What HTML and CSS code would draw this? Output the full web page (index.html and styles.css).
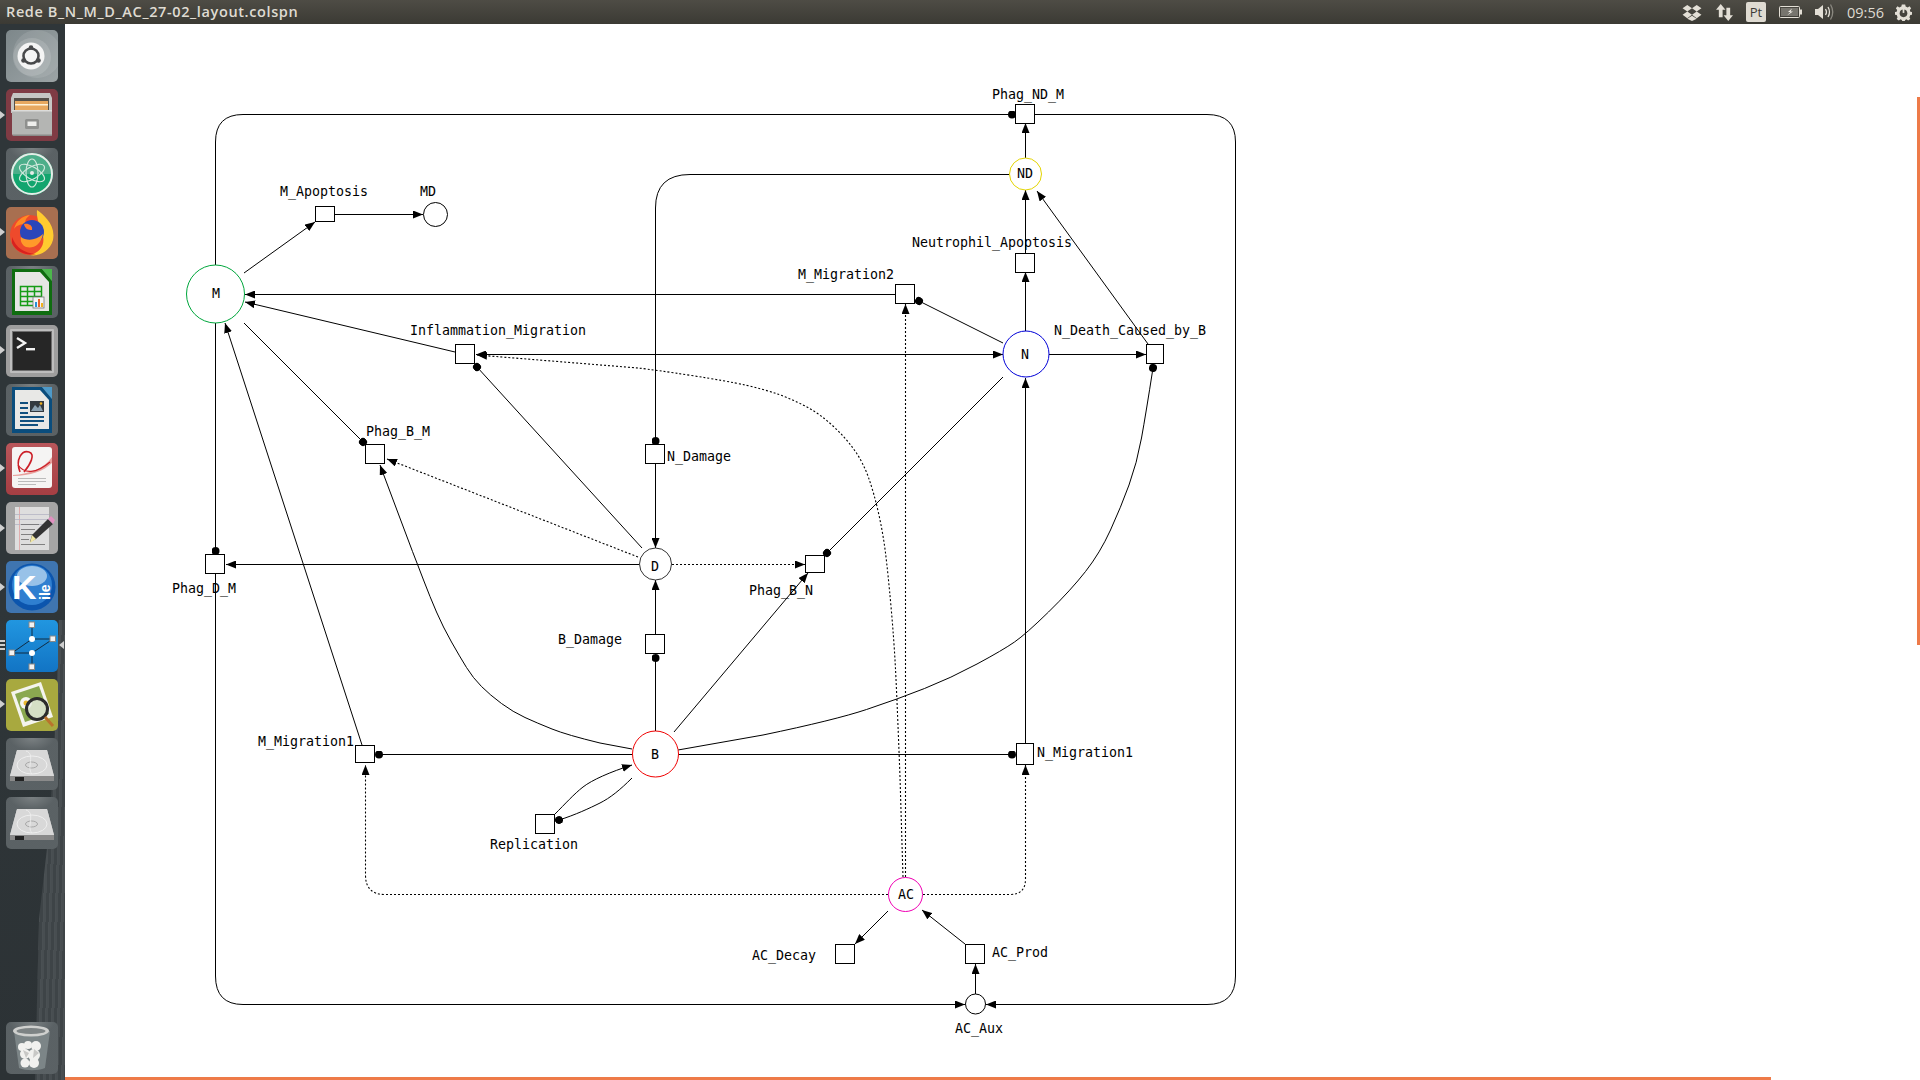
FILE: index.html
```html
<!DOCTYPE html>
<html lang="pt">
<head>
<meta charset="utf-8">
<title>Rede B_N_M_D_AC_27-02_layout.colspn</title>
<link rel="stylesheet" href="styles.css">
</head>
<body>
<div class="screen">
  <header class="topbar">
    <div class="title">Rede B_N_M_D_AC_27-02_layout.colspn</div>
    <div class="tray">
      <svg class="tray-icon dropbox" viewBox="0 0 20 18"><path d="M5 1 10 4.500 5 8 0 4.500ZM15 1 20 4.500 15 8 10 4.500ZM5 8 10 11.500 5 15 0 11.500ZM15 8 20 11.500 15 15 10 11.500ZM5 15.500 10 12.500 15 15.500 10 18Z"/></svg>
      <svg class="tray-icon updown" viewBox="0 0 18 18"><path d="M5 0 10 6H7V14H3V6H0ZM13 18 8 12H11V4H15V12H18Z"/></svg>
      <div class="lang">Pt</div>
      <svg class="tray-icon battery" viewBox="0 0 24 12"><rect x="0.500" y="0.500" width="20" height="11" rx="1" class="batt-shell"/><rect x="2" y="2" width="17" height="8" class="batt-fill"/><rect x="21" y="3.500" width="2" height="5"/><path d="M13 2.500 9 6H11.500L8 9.500 14 5.500H11.500Z" class="batt-bolt"/></svg>
      <svg class="tray-icon speaker" viewBox="0 0 20 18"><path d="M0 6H3L8 2V16L3 12H0Z"/><path d="M10.500 6Q12.500 9 10.500 12" class="wave"/><path d="M13 4Q16 9 13 14" class="wave"/><path d="M15.500 1.500Q20 9 15.500 16.500" class="wave dim"/></svg>
      <div class="clock">09:56</div>
      <svg class="tray-icon power" viewBox="0 0 20 20"><path d="M8 0.500 12 0.500 12.500 3 15 4 17 2.500 19 5 17.500 7 18 9 20 9.500V12.500L18 13 17 15.500 18 17.500 15.500 19.500 13.500 18 12 18.800 11.500 20H8.500L8 18.800 6.500 18 4.500 19.500 2 17.500 3 15.500 2 13 0 12.500V9.500L2 9 2.500 7 1 5 3 2.500 5 4 7.500 3Z"/><circle cx="10" cy="11" r="4.500" class="gear-hole"/><rect x="9" y="3.500" width="2" height="7" class="gear-bar"/></svg>
    </div>
  </header>

  <div class="main">
    <nav class="dock">
      <svg class="pips" viewBox="0 0 65 720" width="65" height="720">
        <path d="M0 87 5 91 0 95ZM0 204 5 208 0 212ZM0 322 5 326 0 330ZM0 440 5 444 0 448ZM0 500 5 504 0 508ZM0 559 5 563 0 567ZM0 676 5 680 0 684Z"/>
        <path d="M0 616H5V618H0ZM0 620H5V622H0ZM0 624H5V626H0Z"/>
        <path d="M64 617 59 621 64 625Z"/>
      </svg>
      <div class="tile t-ubuntu"><svg viewBox="0 0 52 52"><circle cx="31" cy="24" r="24" fill="#fff" opacity=".1"/><circle cx="26" cy="27" r="19" fill="#fff" opacity=".14"/><circle cx="25" cy="26" r="13.500" fill="#f4f4f4"/><circle cx="25" cy="26" r="7.500" fill="none" stroke="#48494b" stroke-width="2.600"/><circle cx="25" cy="17.500" r="2.300" fill="#48494b"/><circle cx="17.500" cy="30.500" r="2.300" fill="#48494b"/><circle cx="32.500" cy="30.500" r="2.300" fill="#48494b"/></svg></div>
      <div class="tile t-files"><svg viewBox="0 0 52 52"><path d="M7 4H44L46 9V24H5V9Z" fill="#c6c6c4"/><rect x="8" y="9" width="35" height="13" fill="#55504a"/><rect x="9" y="12" width="33" height="9" fill="#e8a860"/><rect x="9" y="15" width="33" height="1.500" fill="#fff2d8"/><path d="M6 22H45L46 23V47H7L6 45Z" fill="#b4b5b3"/><rect x="6" y="21" width="40" height="1.500" fill="#dcdcda"/><rect x="7" y="45.500" width="39" height="1.500" fill="#8a8a88"/><rect x="19" y="30" width="14" height="10" rx="1.500" fill="#8f908e"/><rect x="21.500" y="32.500" width="9" height="4.500" fill="#eeeeec"/></svg></div>
      <div class="tile t-atom"><svg viewBox="0 0 52 52"><circle cx="26" cy="26" r="21" fill="#12a56e"/><path d="M5 26A21 21 0 0 1 47 26Z" fill="#4cae8a"/><circle cx="26" cy="26" r="20" fill="none" stroke="#e6ece8" stroke-width="2"/><g fill="none" stroke="#cfe8dc" stroke-width="1.200"><ellipse cx="26" cy="25" rx="14" ry="6" transform="rotate(30 26 25)"/><ellipse cx="26" cy="25" rx="14" ry="6" transform="rotate(-30 26 25)"/><ellipse cx="26" cy="25" rx="14" ry="6" transform="rotate(90 26 25)"/></g><circle cx="26" cy="25" r="2" fill="#e6ece8"/></svg></div>
      <div class="tile t-firefox"><svg viewBox="0 0 52 52"><circle cx="24" cy="28" r="20" fill="#ee4a2c"/><path d="M31 3C38 8 50 18 47 33 44 44 33 50 24 48 34 46 39 38 37 29 36 22 30 14 31 3Z" fill="#ffcb2f"/><path d="M8 22C10 14 16 9 24 8 19 12 18 15 21 17 13 17 10 19 8 22Z" fill="#ff8a24"/><circle cx="26" cy="25" r="12" fill="#2b46ba"/><path d="M15 30C20 34 30 34 37 27 35 38 27 42 20 40 16 38 14 34 15 30Z" fill="#ff9a2a"/><path d="M18 17C22 16 27 18 26 23 22 23 19 22 18 17Z" fill="#ff7a2b"/><path d="M6 36C10 45 20 49 30 47 18 46 10 41 6 30Z" fill="#d8211f"/></svg></div>
      <div class="tile t-calc"><svg viewBox="0 0 52 52"><path d="M6 3H36L46 15V49H6Z" fill="#0f6d10"/><path d="M9 6H34L43 16V45H9Z" fill="#e6e6e4"/><path d="M36 3H46V15Z" fill="#4cb74c"/><g fill="none" stroke="#169c16" stroke-width="1.500"><rect x="14.500" y="20.500" width="21" height="19"/><path d="M14.500 25.500H35.500M14.500 30.500H35.500M14.500 35.500H35.500M21.500 20.500V39.500M28.500 20.500V39.500"/></g><rect x="27" y="31" width="11" height="11" fill="#f4f4f4" stroke="#777" stroke-width=".8"/><rect x="29" y="36" width="2" height="5" fill="#2a8fd6"/><rect x="32" y="33" width="2" height="8" fill="#e8632a"/><rect x="35" y="37" width="2" height="4" fill="#f2b11d"/></svg></div>
      <div class="tile t-term"><svg viewBox="0 0 52 52"><rect x="4" y="4" width="44" height="44" rx="1" fill="#bdbdbd"/><rect x="6" y="6" width="40" height="40" fill="#6e6e6e"/><rect x="7" y="7" width="38" height="38" fill="#262626"/><path d="M11 13 19 18 11 23" fill="none" stroke="#f2f2f2" stroke-width="2.400"/><rect x="20" y="23" width="9" height="2.400" fill="#f2f2f2"/></svg></div>
      <div class="tile t-writer"><svg viewBox="0 0 52 52"><path d="M6 3H36L46 15V49H6Z" fill="#0a4d7d"/><path d="M9 6H34L43 16V45H9Z" fill="#e8e8e6"/><path d="M36 3H46V15Z" fill="#4e9ac9"/><g fill="#11507f"><rect x="14" y="18" width="8" height="2"/><rect x="14" y="23" width="8" height="2"/><rect x="14" y="28" width="8" height="2"/><rect x="14" y="32" width="24" height="2"/><rect x="14" y="36" width="24" height="2"/><rect x="14" y="40" width="18" height="2"/></g><rect x="24" y="17" width="14" height="11" fill="#33393f"/><path d="M25 27 29 21 32 24 34 21 37 27Z" fill="#8aa0b0"/><circle cx="35" cy="19.500" r="1.300" fill="#f0b020"/></svg></div>
      <div class="tile t-pdf"><svg viewBox="0 0 52 52"><rect x="6" y="4" width="40" height="41" rx="3" fill="#f5f4f3"/><path d="M7 32C22 31 38 26 46 14V20C38 28 24 33 7 33Z" fill="#e8a09d"/><path d="M14 29C9 16 16 7 23 9 30 11 24 22 18 29" fill="none" stroke="#cc1f27" stroke-width="1.600"/><path d="M12 22C18 31 30 31 44 19" fill="none" stroke="#cc1f27" stroke-width="1.200"/><g fill="#bbb"><rect x="12" y="35" width="28" height="1"/><rect x="12" y="38" width="28" height="1"/><rect x="12" y="41" width="18" height="1"/></g></svg></div>
      <div class="tile t-notes"><svg viewBox="0 0 52 52"><rect x="9" y="5" width="34" height="43" fill="#dedede"/><rect x="13" y="5" width=".8" height="43" fill="#e0a0a0"/><g fill="#b5b5c4"><rect x="9" y="12" width="34" height=".8"/><rect x="9" y="17" width="34" height=".8"/><rect x="9" y="22" width="34" height=".8"/></g><g fill="#777"><rect x="15" y="22" width="18" height=".9"/><rect x="15" y="27" width="14" height=".9"/><rect x="15" y="32" width="12" height=".9"/><rect x="15" y="37" width="8" height=".9"/><rect x="15" y="42" width="24" height=".9"/></g><path d="M42 17 47 22 30 37 24 40 26 33Z" fill="#333"/><path d="M26 33 30 37 24 41Z" fill="#f0e6a0"/><path d="M42 17 45 14 49 18 47 22Z" fill="#e090c0"/></svg></div>
      <div class="tile t-kile"><svg viewBox="0 0 52 52"><circle cx="26" cy="26" r="23.500" fill="#0c55ad"/><circle cx="26" cy="24" r="20" fill="#2f7fd0"/><ellipse cx="26" cy="15" rx="15" ry="10" fill="#bcd8f0" opacity=".75"/><text x="6" y="38" class="kile-k">K</text><text x="0" y="0" class="kile-ile" transform="translate(44 39) rotate(-90)">ile</text></svg></div>
      <div class="tile t-graph"><svg viewBox="0 0 52 52"><g stroke="#123" stroke-width=".9" fill="none"><path d="M26 5V19M6 33 26 19H47M6 33H26M26 33 47 19M26 33V47"/></g><g fill="#f2f2f2" stroke="#888" stroke-width="1"><rect x="23" y="2" width="5.500" height="5.500"/><rect x="44" y="16" width="5.500" height="5.500"/><rect x="3" y="30" width="5.500" height="5.500"/><rect x="23" y="44" width="5.500" height="5.500"/></g><circle cx="26" cy="19" r="3" fill="#fff"/><circle cx="26" cy="33" r="3" fill="#fff"/></svg></div>
      <div class="tile t-image"><svg viewBox="0 0 52 52"><path d="M5 13 35 3 47 38 17 48Z" fill="#f4f4ee"/><path d="M9 15 33 7 43 35 19 43Z" fill="#8aa850"/><circle cx="20" cy="24" r="6" fill="#f5f5f0"/><circle cx="20" cy="24" r="2.500" fill="#e8b830"/><circle cx="31" cy="30" r="10.500" fill="#e7ece2" opacity=".8"/><circle cx="31" cy="30" r="10.500" fill="none" stroke="#2c2c2c" stroke-width="3"/><path d="M39 38 47 47" stroke="#b9732c" stroke-width="3"/></svg></div>
      <div class="tile t-glass"><svg viewBox="0 0 52 52"><path d="M11 12H41L48 38V43H4V38Z" fill="#c9c9c9"/><path d="M11 12H41L48 38H4Z" fill="#d8d8d8"/><ellipse cx="26" cy="27" rx="15" ry="9" fill="none" stroke="#eee" stroke-width="1"/><ellipse cx="25.500" cy="27" rx="6" ry="3" fill="none" stroke="#a8a8a8" stroke-width="1"/><path d="M20 13C30 16 20 30 26 36" fill="none" stroke="#f0f0f0" stroke-width=".8"/><rect x="4" y="38" width="44" height="5" fill="#8a8a8a"/><rect x="9" y="39" width="9" height="4" fill="#222"/></svg></div>
      <div class="tile t-glass"><svg viewBox="0 0 52 52"><path d="M11 12H41L48 38V43H4V38Z" fill="#c9c9c9"/><path d="M11 12H41L48 38H4Z" fill="#d8d8d8"/><ellipse cx="26" cy="27" rx="15" ry="9" fill="none" stroke="#eee" stroke-width="1"/><ellipse cx="25.500" cy="27" rx="6" ry="3" fill="none" stroke="#a8a8a8" stroke-width="1"/><path d="M20 13C30 16 20 30 26 36" fill="none" stroke="#f0f0f0" stroke-width=".8"/><rect x="4" y="38" width="44" height="5" fill="#8a8a8a"/><rect x="9" y="39" width="9" height="4" fill="#222"/></svg></div>
      <div class="dock-gap"></div>
      <div class="tile t-glass"><svg viewBox="0 0 52 52"><path d="M8 9 13 46C20 49 32 49 39 46L44 9Z" fill="#7c8587"/><ellipse cx="25" cy="9" rx="18" ry="5.500" fill="#cfd0ce"/><ellipse cx="25" cy="9" rx="14.500" ry="3" fill="#7d8384"/><g fill="#f1f1ef"><circle cx="16" cy="25" r="4"/><circle cx="22" cy="23" r="4"/><circle cx="30" cy="24" r="5"/><circle cx="19" cy="32" r="5"/><circle cx="28" cy="33" r="6"/><circle cx="19" cy="41" r="4.500"/><circle cx="28" cy="41" r="5"/></g><path d="M17 28 23 31 20 36ZM28 27 33 31 27 36Z" fill="#c8c8c6"/></svg></div>
    </nav>

    <main class="canvas">
      <svg class="net" viewBox="65 24 1855 1056" width="1855" height="1056">
        <defs>
          <marker id="arrow" viewBox="0 -4 10 8" refX="10" refY="0" markerWidth="10" markerHeight="8" markerUnits="userSpaceOnUse" orient="auto"><path d="M0 -4 10 0 0 4Z" fill="#000"/></marker>
          <marker id="dot" viewBox="-4 -4 8 8" refX="0" refY="0" markerWidth="8" markerHeight="8" markerUnits="userSpaceOnUse" orient="auto"><circle r="4" fill="#000"/></marker>
        </defs>

        <!-- solid arcs -->
        <g class="arc">
          <path marker-end="url(#dot)" d="M215.500 265V142Q215.500 114.500 243 114.500H1012"/>
          <path marker-end="url(#arrow)" d="M1035 114.500H1207Q1235.500 114.500 1235.500 142V976Q1235.500 1004.500 1207 1004.500H986"/>
          <path marker-end="url(#arrow)" d="M215.500 574V976Q215.500 1004.500 243 1004.500H965"/>
          <path marker-end="url(#dot)" d="M215.500 323V551"/>
          <path marker-end="url(#dot)" d="M1009 174.500H690Q655.500 174.500 655.500 208V441"/>
          <path marker-end="url(#arrow)" d="M655.500 464V548"/>
          <path marker-end="url(#dot)" d="M655.500 731V658"/>
          <path marker-end="url(#arrow)" d="M655.500 634V580"/>
          <path marker-end="url(#arrow)" d="M639 564.500H226"/>
          <path marker-end="url(#arrow)" d="M1025.500 331V272"/>
          <path marker-end="url(#arrow)" d="M1025.500 253V190"/>
          <path marker-end="url(#arrow)" d="M1025.500 158V123"/>
          <path marker-end="url(#arrow)" d="M1049 354.500H1146"/>
          <path marker-end="url(#arrow)" d="M488 354.500H1003"/>
          <path marker-end="url(#arrow)" d="M488 354.500H476"/>
          <path marker-end="url(#arrow)" d="M895 294.500H245"/>
          <path marker-end="url(#arrow)" d="M335 214.500H423"/>
          <path marker-end="url(#dot)" d="M632 754.500H379"/>
          <path marker-end="url(#dot)" d="M678 754.500H1012"/>
          <path marker-end="url(#arrow)" d="M1025.500 743V378"/>
          <path marker-end="url(#arrow)" d="M975.500 994V964"/>
        </g>
        <g class="arc thin">
          <path marker-end="url(#arrow)" d="M1148 344 1037 191"/>
          <path marker-end="url(#dot)" d="M1003 343 919 301"/>
          <path marker-end="url(#arrow)" d="M455 352 245 302"/>
          <path marker-end="url(#dot)" d="M244 323 363 442"/>
          <path marker-end="url(#arrow)" d="M244 273 315 222"/>
          <path marker-end="url(#arrow)" d="M362 745 225 323"/>
          <path marker-end="url(#dot)" d="M642 548 477 367"/>
          <path marker-end="url(#arrow)" d="M674 732 808 573"/>
          <path marker-end="url(#dot)" d="M1003 377 827 553"/>
          <path marker-end="url(#arrow)" d="M632 749 600 743Q567 735 552 729 537 723 525 717.500 513 712 501.500 703.500 490 695 481.500 686.500 473 678 466.500 667.500 460 657 451.500 642 443 627 436.500 612 430 597 423.500 580 417 563 412.500 551.500L380 465"/>
          <path marker-end="url(#dot)" d="M678 750 763 735Q835 720 866.500 709.500 898 699 924.500 688.500 951 678 977 664 1003 650 1014.500 642 1026 634 1048.500 612 1071 590 1085.500 571.500 1100 553 1110.500 530 1121 507 1129 485 1137 463 1141.500 438 1146 413 1153 368"/>
          <path marker-end="url(#arrow)" d="M555 814C565 804 574 794 583 787S610 772 632 765"/>
          <path marker-end="url(#dot)" d="M632 778C620 790 610 798 600 803S575 815 559 820"/>
          <path marker-end="url(#arrow)" d="M888 911 855 944"/>
          <path marker-end="url(#arrow)" d="M965 944 922 910"/>
        </g>

        <!-- dotted arcs -->
        <g class="arc dotted">
          <path marker-end="url(#arrow)" d="M672 564.500H805"/>
          <path marker-end="url(#arrow)" d="M638 557 387 459"/>
          <path marker-end="url(#arrow)" d="M923 894.500H1010Q1025.500 894.500 1025.500 879V765"/>
          <path marker-end="url(#arrow)" d="M888 894.500H385Q365.500 894.500 365.500 875V765"/>
          <path marker-end="url(#arrow)" d="M905.500 877V304"/>
          <path marker-end="url(#arrow)" d="M903 877 900 777Q897 698 895.500 669 894 640 891 606.500 888 573 885.500 553 883 533 878.500 513 874 493 868.500 477.500 863 462 854 449.500 845 437 832.500 425.500 820 414 806 406.500 792 399 777.500 394 763 389 745 385 727 381 691.500 375.500 656 370 638 368L477 355"/>
        </g>

        <!-- places -->
        <circle class="place p-m" cx="215.500" cy="294" r="29"/>
        <circle class="place" cx="435.500" cy="214.500" r="12"/>
        <circle class="place p-nd" cx="1025.500" cy="174" r="16"/>
        <circle class="place p-n" cx="1026" cy="354" r="23"/>
        <circle class="place p-d" cx="655.500" cy="564" r="16"/>
        <circle class="place p-b" cx="655.500" cy="754" r="23"/>
        <circle class="place p-ac" cx="905.500" cy="894.500" r="17"/>
        <circle class="place" cx="975.500" cy="1004" r="10"/>

        <!-- transitions -->
        <rect class="trans" x="315.500" y="206.500" width="19" height="15"/>
        <rect class="trans" x="455.500" y="344.500" width="19" height="19"/>
        <rect class="trans" x="365.500" y="444.500" width="19" height="19"/>
        <rect class="trans" x="205.500" y="554.500" width="19" height="19"/>
        <rect class="trans" x="355.500" y="745.500" width="19" height="17"/>
        <rect class="trans" x="535.500" y="814.500" width="19" height="19"/>
        <rect class="trans" x="645.500" y="444.500" width="19" height="19"/>
        <rect class="trans" x="645.500" y="634.500" width="19" height="19"/>
        <rect class="trans" x="805.500" y="555.500" width="19" height="17"/>
        <rect class="trans" x="895.500" y="284.500" width="19" height="19"/>
        <rect class="trans" x="1015.500" y="104.500" width="19" height="19"/>
        <rect class="trans" x="1015.500" y="253.500" width="19" height="19"/>
        <rect class="trans" x="1146.500" y="344.500" width="17" height="19"/>
        <rect class="trans" x="1016.500" y="743.500" width="17" height="21"/>
        <rect class="trans" x="835.500" y="944.500" width="19" height="19"/>
        <rect class="trans" x="965.500" y="944.500" width="19" height="19"/>

        <!-- labels -->
        <g class="lbl">
          <text x="992" y="99">Phag_ND_M</text>
          <text x="1017" y="178">ND</text>
          <text x="912" y="247">Neutrophil_Apoptosis</text>
          <text x="798" y="279">M_Migration2</text>
          <text x="1054" y="335">N_Death_Caused_by_B</text>
          <text x="1021" y="359">N</text>
          <text x="280" y="196">M_Apoptosis</text>
          <text x="420" y="196">MD</text>
          <text x="212" y="298">M</text>
          <text x="410" y="335">Inflammation_Migration</text>
          <text x="366" y="436">Phag_B_M</text>
          <text x="667" y="461">N_Damage</text>
          <text x="651" y="571">D</text>
          <text x="749" y="595">Phag_B_N</text>
          <text x="558" y="644">B_Damage</text>
          <text x="172" y="593">Phag_D_M</text>
          <text x="258" y="746">M_Migration1</text>
          <text x="651" y="759">B</text>
          <text x="1037" y="757">N_Migration1</text>
          <text x="490" y="849">Replication</text>
          <text x="898" y="899">AC</text>
          <text x="992" y="957">AC_Prod</text>
          <text x="752" y="960">AC_Decay</text>
          <text x="955" y="1033">AC_Aux</text>
        </g>
      </svg>
      <div class="scroll-v"></div>
      <div class="scroll-h"></div>
    </main>
  </div>
</div>
</body>
</html>
```
FILE: styles.css
```css
* { box-sizing: border-box; }
html, body { margin: 0; padding: 0; background: #fff; }
.screen {
  width: 1920px; height: 1080px; overflow: hidden;
  display: grid; grid-template-rows: 24px 1fr;
}

/* top panel */
.topbar {
  display: flex; align-items: center; justify-content: space-between;
  background: linear-gradient(#4e4c45, #3b3a34);
  color: #dfdbd2; font-family: "Open Sans", "Noto Sans", sans-serif;
}
.title { padding-left: 6px; margin-top: -1px; font-size: 14.500px; letter-spacing: .62px; font-weight: 600; white-space: nowrap; }
.tray { display: flex; align-items: center; height: 24px; }
.tray-icon { display: block; fill: #e3dfd6; }
.dropbox { width: 20px; height: 17px; margin-right: 14px; }
.updown { width: 17px; height: 17px; margin-right: 13px; }
.lang {
  width: 20px; height: 20px; margin-right: 13px; border-radius: 2px;
  background: #dfdbd2; color: #3c3b37; font-size: 13px; line-height: 20px; text-align: center;
}
.battery { width: 24px; height: 12px; margin-right: 12px; }
.batt-shell { fill: none; stroke: #e3dfd6; }
.batt-fill { fill: #77756e; }
.batt-bolt { fill: #f2efe8; }
.speaker { width: 20px; height: 18px; margin-right: 12px; }
.wave { fill: none; stroke: #e3dfd6; stroke-width: 1.300; }
.wave.dim { stroke: #8b8981; }
.clock { width: 37px; margin-right: 11px; font-size: 14.500px; color: #dfdbd2; white-space: nowrap; }
.power { width: 17px; height: 17px; margin-right: 8px; }
.gear-hole { fill: #45433d; }
.gear-bar { fill: #e3dfd6; }

/* launcher */
.main { display: flex; min-height: 0; }
.dock {
  position: relative; flex: 0 0 65px; width: 65px;
  display: flex; flex-direction: column; gap: 7px;
  padding: 6px 7px 6px 6px;
  background: linear-gradient(#2f3639, #2f3639 55%, #2c3235);
}
.dock::before {
  content: ""; position: absolute; left: 0; right: 0; top: 596px; bottom: 0;
  clip-path: polygon(90% 0, 100% 0, 100% 100%, 54% 100%, 60% 65%, 76% 45%, 88% 15%);
  background: repeating-linear-gradient(92deg, #484e51 0 2px, #3e4447 2px 5px, #4a5053 5px 6px);
}
.pips { position: absolute; left: 0; top: 0; fill: #cfcfcf; }
.tile {
  position: relative; flex: 0 0 52px; width: 52px; height: 52px;
  border-radius: 5px; overflow: hidden;
}
.tile svg { display: block; width: 52px; height: 52px; }
.dock-gap { flex: 1; margin-top: -7px; }
.t-ubuntu { background: linear-gradient(135deg, #7d878a, #9ca4a6); }
.t-files { background: #7f3b44; }
.t-atom, .t-calc, .t-writer, .t-glass {
  background: radial-gradient(ellipse 32px 18px at 50% 0, #7b8183, rgba(95,102,105,.7) 70%), linear-gradient(#50575a, #50575a);
}
.t-firefox { background: #a86f50; }
.t-term { background: #9e9e9e; }
.t-pdf { background: linear-gradient(#b9565a, #a53e43); }
.t-notes { background: #a5a5a5; }
.t-kile { background: #3f75b0; }
.t-graph { background: linear-gradient(#2196e0, #1274c4); }
.t-image { background: #a8a93f; }
.kile-k { font: 700 34px "Liberation Sans", sans-serif; fill: #fff; }
.kile-ile { font: 700 14px "Liberation Sans", sans-serif; fill: #fff; }

/* petri net */
.canvas { position: relative; flex: 1; background: #fff; overflow: hidden; }
.net { display: block; }
.arc path { fill: none; stroke: #000; stroke-width: 1; }
.arc.dotted path { stroke-width: 1.100; stroke-dasharray: 2 2; }
.place { fill: #fff; stroke: #000; stroke-width: 1; }
.p-m { stroke: #00a63c; }
.p-nd { stroke: #e3d400; }
.p-n { stroke: #0000d8; }
.p-d { stroke: #333; }
.p-b { stroke: #f00000; }
.p-ac { stroke: #f000b4; }
.trans { fill: #fff; stroke: #000; stroke-width: 1; }
.lbl text { font: 13.300px "DejaVu Sans Mono", monospace; fill: #000; }
.scroll-v, .scroll-h { position: absolute; background: #ee7a48; }
.scroll-v { right: 0; top: 73px; width: 3px; height: 548px; }
.scroll-h { left: 0; bottom: 0; width: 1706px; height: 3px; }
```
